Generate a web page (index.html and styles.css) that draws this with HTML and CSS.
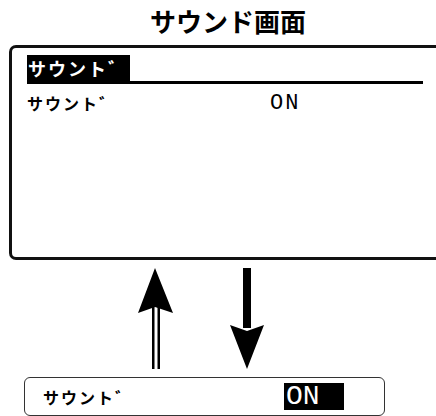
FILE: index.html
```html
<!DOCTYPE html>
<html lang="ja">
<head>
    <meta charset="UTF-8">
    <meta name="viewport" content="width=device-width, initial-scale=1.0">
    <title>サウンド画面</title>
    <link rel="stylesheet" href="styles.css">
</head>
<body>
    <h1 class="title">サウンド画面</h1>

    <div class="screen">
        <div class="screen-head">
            <span class="head-label">サウント゛</span>
        </div>
        <div class="screen-row">
            <span class="row-label">サウント゛</span>
            <span class="row-value">ON</span>
        </div>
    </div>

    <svg class="arrows" width="140" height="113" viewBox="0 0 140 113">
        <!-- up: double stem -->
        <rect x="22" y="44" width="2.5" height="63" fill="#000"/>
        <rect x="27.5" y="44" width="2.5" height="63" fill="#000"/>
        <polygon points="25,6 43,51 25,45 8,51" fill="#000"/>
        <!-- down: solid stem -->
        <rect x="113" y="6" width="8" height="60" fill="#000"/>
        <polygon points="100,63 117,69 134,63 117,107" fill="#000"/>
    </svg>

    <div class="strip">
        <span class="strip-label">サウント゛</span>
        <span class="strip-value">ON</span>
    </div>
</body>
</html>
```

FILE: styles.css
```css
body {
    margin: 0;
    padding: 0;
    background: #fff;
    color: #000;
    font-family: "Noto Sans CJK JP", "Noto Sans", sans-serif;
    overflow: hidden;
}

.title {
    margin: 0;
    height: 45px;
    line-height: 42px;
    padding-left: 20px;
    text-align: center;
    font-size: 26px;
    font-weight: bold;
}

.screen {
    margin-left: 9px;
    width: 440px;
    height: 202px;
    border: 3px solid #111;
    border-radius: 7px;
    padding: 7px 0 0 15px;
    box-sizing: content-box;
}

.screen-head {
    width: 396px;
    border-bottom: 3px solid #000;
    display: flex;
}

.head-label {
    background: #000;
    color: #fff;
    font-size: 18px;
    font-weight: bold;
    height: 26px;
    line-height: 26px;
    padding: 0 2px 0 1px;
    letter-spacing: 2px;
    white-space: nowrap;
}

.screen-row {
    display: flex;
    align-items: center;
    margin-top: 8px;
    height: 22px;
}

.row-label {
    width: 243px;
    font-size: 16px;
    font-weight: bold;
    letter-spacing: 2px;
    white-space: nowrap;
}

.row-value {
    font-family: "Liberation Mono", monospace;
    font-size: 22px;
    letter-spacing: 2px;
}

.arrows {
    display: block;
    margin: 2px 0 0 130px;
}

.strip {
    margin: 2px 0 0 24px;
    width: 359px;
    height: 37px;
    border: 1px solid #333;
    border-radius: 6px;
    display: flex;
    align-items: center;
}

.strip-label {
    width: 241px;
    padding-left: 18px;
    font-size: 16px;
    font-weight: bold;
    letter-spacing: 2px;
    white-space: nowrap;
}

.strip-value {
    background: #000;
    color: #fff;
    width: 58px;
    height: 27px;
    line-height: 27px;
    padding-left: 2px;
    font-family: "Liberation Mono", monospace;
    font-size: 28px;
}
```
